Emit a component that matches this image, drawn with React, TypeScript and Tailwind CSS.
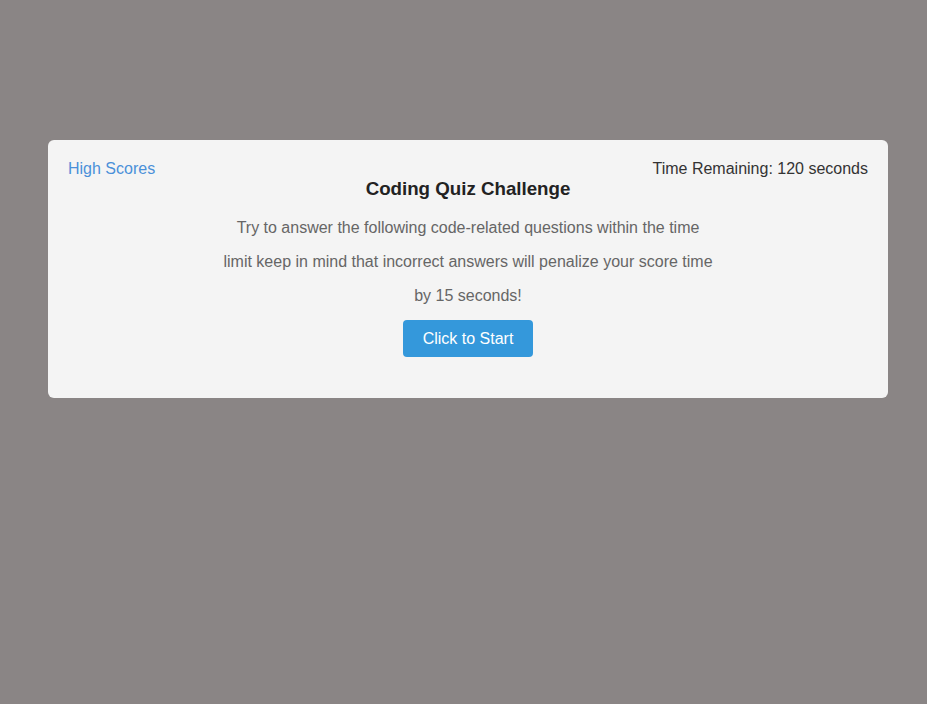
export default function App() {
  return (
    <div
      className="min-h-[704px] w-full bg-[#8a8585] pt-[140px] pl-[48px]"
      style={{ fontFamily: '"Liberation Sans", Arial, sans-serif' }}
    >
      <div className="w-[840px] bg-[#f4f4f4] rounded-[6px] px-[20px] pt-[20px] pb-[41px]">
        {/* Header */}
        <div className="flex justify-between items-center text-[16px] leading-[18px]">
          <a href="#" className="text-[#4a90d9]">High Scores</a>
          <span className="text-[#333]">Time Remaining: 120 seconds</span>
        </div>

        <div className="flex flex-col items-center">
          <h1 className="text-[18.72px] leading-[22px] font-bold text-[#222]">
            Coding Quiz Challenge
          </h1>
          <p className="mt-[11px] max-w-[492px] text-center text-[16px] leading-[34px] text-[#666]">
            Try to answer the following code-related questions within the time limit keep in mind that incorrect answers will penalize your score time by 15 seconds!
          </p>
          <button className="mt-[7px] w-[130px] h-[37px] bg-[#3498db] text-white text-[16px] rounded-[4px]">
            Click to Start
          </button>
        </div>
      </div>
    </div>
  );
}
